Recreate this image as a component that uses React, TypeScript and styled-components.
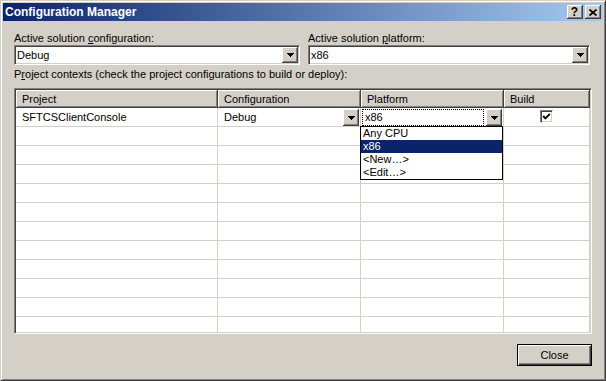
import styled, { createGlobalStyle, css } from "styled-components";

const GlobalStyle = createGlobalStyle`
  html, body {
    margin: 0;
    padding: 0;
    background: #d4d0c8;
  }
  body {
    font-family: "Liberation Sans", Arial, sans-serif;
    font-size: 11px;
    color: #000;
  }
`;

const raised = css`
  box-shadow: inset -1px -1px 0 #404040, inset 1px 1px 0 #fff,
    inset -2px -2px 0 #808080, inset 2px 2px 0 #d4d0c8;
  background: #d4d0c8;
`;

const Arrow = () => (
  <svg width="7" height="4" viewBox="0 0 7 4" shapeRendering="crispEdges">
    <polygon points="0,0 7,0 3.5,4" fill="#000" />
  </svg>
);

const Check = () => (
  <svg width="9" height="9" viewBox="0 0 9 9">
    <polyline points="1.2,4 3.4,6.4 7.8,1.8" fill="none" stroke="#000" strokeWidth="1.9" />
  </svg>
);

const CloseGlyph = () => (
  <svg width="8" height="7" viewBox="0 0 8 7">
    <path d="M0.5 0.5 L7.5 6.5 M7.5 0.5 L0.5 6.5" stroke="#000" strokeWidth="1.7" />
  </svg>
);

const platforms = ["Any CPU", "x86", "<New…>", "<Edit…>"];
const emptyRows = Array.from({ length: 11 });

const App = () => {
  return (
    <>
      <GlobalStyle />
      <Window>
        <TitleBar>
          <Title>Configuration Manager</Title>
          <TitleButtons>
            <TitleButton>?</TitleButton>
            <TitleButton>
              <CloseGlyph />
            </TitleButton>
          </TitleButtons>
        </TitleBar>
        <Body>
          <TopRow>
            <Field>
              <Label>
                Active solution <u>c</u>onfiguration:
              </Label>
              <Combo>
                <ComboText>Debug</ComboText>
                <DropButton>
                  <Arrow />
                </DropButton>
              </Combo>
            </Field>
            <Field>
              <Label>
                Active solution <u>p</u>latform:
              </Label>
              <Combo>
                <ComboText>x86</ComboText>
                <DropButton>
                  <Arrow />
                </DropButton>
              </Combo>
            </Field>
          </TopRow>
          <ContextLabel>
            P<u>r</u>oject contexts (check the project configurations to build or deploy):
          </ContextLabel>
          <Grid>
            <HeaderCell>Project</HeaderCell>
            <HeaderCell>Configuration</HeaderCell>
            <HeaderCell>Platform</HeaderCell>
            <HeaderCell>Build</HeaderCell>

            <Cell>SFTCSClientConsole</Cell>
            <Cell>
              <CellText>Debug</CellText>
              <CellDrop>
                <Arrow />
              </CellDrop>
            </Cell>
            <EditCell>
              <FocusBox>x86</FocusBox>
              <CellDrop>
                <Arrow />
              </CellDrop>
              <DropList>
                {platforms.map((p) => (
                  <DropItem key={p} $selected={p === "x86"}>
                    {p}
                  </DropItem>
                ))}
              </DropList>
            </EditCell>
            <Cell $center>
              <CheckBox>
                <Check />
              </CheckBox>
            </Cell>

            {emptyRows.map((_, i) => (
              <Row key={i}>
                <Cell />
                <Cell />
                <Cell />
                <Cell />
              </Row>
            ))}
          </Grid>
          <Footer>
            <Button>Close</Button>
          </Footer>
        </Body>
      </Window>
    </>
  );
};

export default App;

const Window = styled.div`
  box-sizing: border-box;
  width: 606px;
  height: 381px;
  display: flex;
  flex-direction: column;
  padding: 2px;
  background: #d4d0c8;
  border: 1px solid;
  border-color: #d4d0c8 #404040 #404040 #d4d0c8;
  box-shadow: inset 1px 1px 0 #fff, inset -1px -1px 0 #808080;
`;
const TitleBar = styled.div`
  height: 18px;
  display: flex;
  align-items: center;
  padding: 0 2px 0 2px;
  background: linear-gradient(to right, #0a246a, #a6caf0);
`;
const Title = styled.span`
  color: #fff;
  font-weight: 700;
  font-size: 12px;
  white-space: nowrap;
`;
const TitleButtons = styled.div`
  margin-left: auto;
  display: flex;
  gap: 2px;
`;
const TitleButton = styled.div`
  ${raised};
  box-sizing: border-box;
  width: 16px;
  height: 14px;
  display: flex;
  align-items: center;
  justify-content: center;
  font-weight: 700;
  font-size: 12px;
  line-height: 14px;
  padding-right: 1px;
`;
const Body = styled.div`
  flex: 1;
  min-height: 0;
  display: flex;
  flex-direction: column;
  padding: 11px 11px 12px 11px;
`;
const TopRow = styled.div`
  display: grid;
  grid-template-columns: 286px 282px;
  column-gap: 8px;
`;
const Field = styled.div`
  display: flex;
  flex-direction: column;
`;
const Label = styled.div`
  line-height: 13px;
  white-space: nowrap;
`;
const Combo = styled.div`
  box-sizing: border-box;
  height: 20px;
  display: flex;
  align-items: stretch;
  padding: 1px;
  border: 1px solid;
  border-color: #808080 #fff #fff #808080;
  box-shadow: inset 1px 1px 0 #404040, inset -1px -1px 0 #d4d0c8;
  background: #fff;
`;
const ComboText = styled.div`
  flex: 1;
  display: flex;
  align-items: center;
  padding-left: 1px;
`;
const DropButton = styled.div`
  ${raised};
  width: 16px;
  display: flex;
  align-items: center;
  justify-content: center;
`;
const ContextLabel = styled.div`
  margin-top: 3px;
  line-height: 13px;
  white-space: nowrap;
`;
const Grid = styled.div`
  flex: 1;
  min-height: 0;
  margin-top: 7px;
  display: grid;
  grid-template-columns: 202px 143px 143px 86px;
  grid-template-rows: 18px;
  grid-auto-rows: 19px;
  align-content: start;
  overflow: hidden;
  padding: 1px;
  border: 1px solid;
  border-color: #808080 #fff #fff #808080;
  box-shadow: inset 1px 1px 0 #404040, inset -1px -1px 0 #d4d0c8;
  background: #fff;
`;
const HeaderCell = styled.div`
  ${raised};
  padding-left: 6px;
  line-height: 18px;
  white-space: nowrap;
`;
const Row = styled.div`
  display: contents;
`;
const Cell = styled.div<{ $center?: boolean }>`
  box-sizing: border-box;
  position: relative;
  display: flex;
  align-items: center;
  justify-content: ${(p) => (p.$center ? "center" : "flex-start")};
  padding-left: ${(p) => (p.$center ? "0" : "6px")};
  border-right: 1px solid #d4d0c8;
  border-bottom: 1px solid #d4d0c8;
  white-space: nowrap;
`;
const CellText = styled.span`
  flex: 1;
`;
const CellDrop = styled.div`
  ${raised};
  flex: none;
  width: 16px;
  height: 17px;
  align-self: flex-start;
  margin-top: 1px;
  margin-right: 1px;
  display: flex;
  align-items: center;
  justify-content: center;
`;
const EditCell = styled(Cell)`
  padding-left: 1px;
  gap: 2px;
`;
const FocusBox = styled.div`
  flex: 1;
  box-sizing: border-box;
  height: 17px;
  align-self: flex-start;
  margin-top: 1px;
  border: 1px dotted #000;
  padding-left: 2px;
  line-height: 15px;
`;
const DropList = styled.div`
  position: absolute;
  z-index: 2;
  top: 18px;
  left: -1px;
  width: 143px;
  box-sizing: border-box;
  border: 1px solid #000;
  background: #fff;
`;
const DropItem = styled.div<{ $selected?: boolean }>`
  height: 13px;
  line-height: 13px;
  padding-left: 2px;
  font-size: 11px;
  color: ${(p) => (p.$selected ? "#fff" : "#000")};
  background: ${(p) => (p.$selected ? "#0a246a" : "transparent")};
`;
const CheckBox = styled.div`
  box-sizing: border-box;
  width: 13px;
  height: 13px;
  margin-top: -2px;
  display: flex;
  align-items: center;
  justify-content: center;
  border: 1px solid;
  border-color: #808080 #fff #fff #808080;
  box-shadow: inset 1px 1px 0 #404040, inset -1px -1px 0 #d4d0c8;
  background: #fff;
`;
const Footer = styled.div`
  display: flex;
  justify-content: flex-end;
  margin-top: 10px;
`;
const Button = styled.button`
  box-sizing: border-box;
  width: 75px;
  height: 22px;
  margin: 0;
  padding: 0;
  font-family: "Liberation Sans", Arial, sans-serif;
  font-size: 11px;
  color: #000;
  background: #d4d0c8;
  border: 1px solid #000;
  box-shadow: inset 1px 1px 0 #fff, inset -1px -1px 0 #404040,
    inset -2px -2px 0 #808080;
`;
